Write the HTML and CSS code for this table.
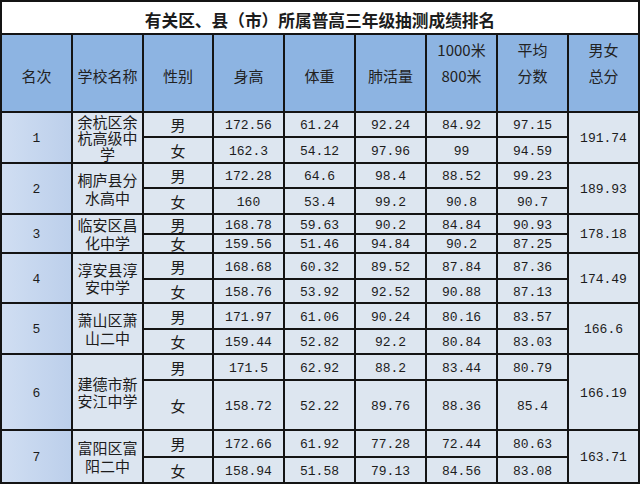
FILE: index.html
```html
<!DOCTYPE html>
<html lang="zh-CN">
<head>
<meta charset="utf-8">
<title>有关区、县（市）所属普高三年级抽测成绩排名</title>
<link rel="stylesheet" href="styles.css">
</head>
<body>
<div class="sheet">
  <div class="c title">有关区、县（市）所属普高三年级抽测成绩排名</div>

  <div class="c head">名次</div>
  <div class="c head">学校名称</div>
  <div class="c head">性别</div>
  <div class="c head">身高</div>
  <div class="c head">体重</div>
  <div class="c head">肺活量</div>
  <div class="c head two">1000米<br>800米</div>
  <div class="c head two">平均<br>分数</div>
  <div class="c head two">男女<br>总分</div>

  <div class="c rank num">1</div>
  <div class="c school tight">余杭区余杭高级中学</div>
  <div class="c g">男</div><div class="c num">172.56</div><div class="c num">61.24</div><div class="c num">92.24</div><div class="c num">84.92</div><div class="c num">97.15</div>
  <div class="c total num">191.74</div>
  <div class="c g">女</div><div class="c num">162.3</div><div class="c num">54.12</div><div class="c num">97.96</div><div class="c num">99</div><div class="c num">94.59</div>

  <div class="c rank num">2</div>
  <div class="c school">桐庐县分水高中</div>
  <div class="c g">男</div><div class="c num">172.28</div><div class="c num">64.6</div><div class="c num">98.4</div><div class="c num">88.52</div><div class="c num">99.23</div>
  <div class="c total num">189.93</div>
  <div class="c g">女</div><div class="c num">160</div><div class="c num">53.4</div><div class="c num">99.2</div><div class="c num">90.8</div><div class="c num">90.7</div>

  <div class="c rank num">3</div>
  <div class="c school">临安区昌化中学</div>
  <div class="c g">男</div><div class="c num">168.78</div><div class="c num">59.63</div><div class="c num">90.2</div><div class="c num">84.84</div><div class="c num">90.93</div>
  <div class="c total num">178.18</div>
  <div class="c g">女</div><div class="c num">159.56</div><div class="c num">51.46</div><div class="c num">94.84</div><div class="c num">90.2</div><div class="c num">87.25</div>

  <div class="c rank num">4</div>
  <div class="c school">淳安县淳安中学</div>
  <div class="c g">男</div><div class="c num">168.68</div><div class="c num">60.32</div><div class="c num">89.52</div><div class="c num">87.84</div><div class="c num">87.36</div>
  <div class="c total num">174.49</div>
  <div class="c g">女</div><div class="c num">158.76</div><div class="c num">53.92</div><div class="c num">92.52</div><div class="c num">90.88</div><div class="c num">87.13</div>

  <div class="c rank num">5</div>
  <div class="c school">萧山区萧山二中</div>
  <div class="c g">男</div><div class="c num">171.97</div><div class="c num">61.06</div><div class="c num">90.24</div><div class="c num">80.16</div><div class="c num">83.57</div>
  <div class="c total num">166.6</div>
  <div class="c g">女</div><div class="c num">159.44</div><div class="c num">52.82</div><div class="c num">92.2</div><div class="c num">80.84</div><div class="c num">83.03</div>

  <div class="c rank num">6</div>
  <div class="c school">建德市新安江中学</div>
  <div class="c g">男</div><div class="c num">171.5</div><div class="c num">62.92</div><div class="c num">88.2</div><div class="c num">83.44</div><div class="c num">80.79</div>
  <div class="c total num">166.19</div>
  <div class="c g">女</div><div class="c num">158.72</div><div class="c num">52.22</div><div class="c num">89.76</div><div class="c num">88.36</div><div class="c num">85.4</div>

  <div class="c rank num">7</div>
  <div class="c school">富阳区富阳二中</div>
  <div class="c g">男</div><div class="c num">172.66</div><div class="c num">61.92</div><div class="c num">77.28</div><div class="c num">72.44</div><div class="c num">80.63</div>
  <div class="c total num">163.71</div>
  <div class="c g">女</div><div class="c num">158.94</div><div class="c num">51.58</div><div class="c num">79.13</div><div class="c num">84.56</div><div class="c num">83.08</div>
</div>
</body>
</html>
```

FILE: styles.css
```css
html, body {
  margin: 0;
  padding: 0;
  background: #ffffff;
}

.sheet {
  width: 640px;
  box-sizing: border-box;
  display: grid;
  grid-template-columns: 69px 69px 68px repeat(6, 69px);
  grid-template-rows: 31px 76px 23px 24px 23px 24px 18px 17px 24px 22px 24px 23px 24px 48px 25px 24px;
  gap: 2px;
  padding: 2px;
  background: #141414;
  font-family: "Noto Sans CJK SC", sans-serif;
  color: #1c1c1c;
}

.c {
  display: flex;
  align-items: center;
  justify-content: center;
  text-align: center;
  background: #dde6f0;
  font-size: 15px;
  line-height: 17px;
}

.title {
  grid-column: 1 / -1;
  background: #ffffff;
  font-size: 16.7px;
  font-weight: 700;
  padding-top: 6px;
  box-sizing: border-box;
}

.head {
  background: #8db4e2;
  font-size: 15px;
  padding-top: 4px;
  box-sizing: border-box;
  color: #222;
}

.head.two {
  align-items: flex-start;
  line-height: 26px;
  padding-top: 2px;
}

.rank {
  grid-row: span 2;
  background: linear-gradient(to right, #d0def2, #bccfeb);
}

.school {
  grid-row: span 2;
  padding: 0 4px;
  line-height: 17.5px;
  background: #dce5f0;
}

.school.tight {
  line-height: 16px;
}

.g {
  line-height: 15px;
}

.total {
  grid-row: span 2;
}

.num {
  font-family: "Liberation Mono", "Noto Sans CJK SC", monospace;
  font-size: 13px;
  padding-top: 2px;
  box-sizing: border-box;
}
```
